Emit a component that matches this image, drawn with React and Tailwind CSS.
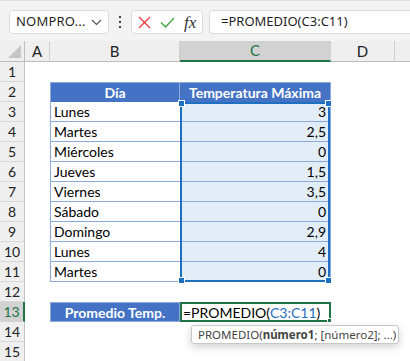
import React from 'react';

const rows = [
  ['Lunes', '3'],
  ['Martes', '2,5'],
  ['Miércoles', '0'],
  ['Jueves', '1,5'],
  ['Viernes', '3,5'],
  ['Sábado', '0'],
  ['Domingo', '2,9'],
  ['Lunes', '4'],
  ['Martes', '0'],
];

const cellFont = { fontFamily: 'Lato, "Liberation Sans", sans-serif' };

const RowHead = ({ n, active }) => (
  <div
    className={
      active
        ? 'flex items-center justify-center bg-[#d2d2d2] border-b border-[#d2d2d2] border-r-2 border-r-[#217346] text-[#217346] text-[14px]'
        : 'flex items-center justify-center bg-[#efefef] border-b border-[#d8d8d8] border-r border-r-[#c4c4c4] text-[#222] text-[14px]'
    }
  >
    {n}
  </div>
);

const Handle = ({ pos }) => (
  <span className={'absolute w-[7px] h-[7px] bg-[#1f6fc0] border border-white ' + pos} />
);

const Toolbar = () => (
  <div className="h-[41px] bg-[#f3f3f3] border-t border-[#e2e2e2] flex items-start pt-[9px]" style={{ fontFamily: '"Noto Sans", "Open Sans", sans-serif' }}>
    <div className="ml-[9px] w-[100px] h-[24px] bg-white border border-[#dcdcdc] rounded-[4px] flex items-center justify-between pl-[6px] pr-[6px]">
      <span className="text-[13px] text-[#1f1f1f] tracking-[0.2px]">NOMPRO...</span>
      <svg width="11" height="7" viewBox="0 0 11 7" fill="none" stroke="#555" strokeWidth="1.2">
        <path d="M1 1l4.5 4.5L10 1" />
      </svg>
    </div>
    <div className="w-[22px] h-[24px] flex flex-col items-center justify-center gap-[3px]">
      <span className="w-[2px] h-[2px] bg-[#444]" />
      <span className="w-[2px] h-[2px] bg-[#444]" />
      <span className="w-[2px] h-[2px] bg-[#444]" />
    </div>
    <div className="w-[72px] h-[24px] bg-white border border-[#dcdcdc] rounded-[4px] flex items-center pl-[6px] gap-[9px]">
      <svg width="13" height="13" viewBox="0 0 13 13" fill="none" stroke="#e8383d" strokeWidth="1.3">
        <path d="M1 1l11 11M12 1L1 12" />
      </svg>
      <svg width="15" height="11" viewBox="0 0 15 11" fill="none" stroke="#3aa845" strokeWidth="1.3">
        <path d="M1 5.5l4.5 4.5L14 1" />
      </svg>
      <span className="text-[17px] italic text-[#333] leading-none" style={{ fontFamily: '"Liberation Serif", serif' }}>fx</span>
    </div>
    <div className="ml-[6px] flex-1 h-[24px] bg-white border border-[#dcdcdc] border-r-0 rounded-l-[4px] flex items-center pl-[11px]">
      <span className="text-[13px] text-[#1f1f1f]">=PROMEDIO(C3:C11)</span>
    </div>
  </div>
);

export default function App() {
  return (
    <div className="w-[410px] h-[361px] overflow-hidden bg-white" style={cellFont}>
      <Toolbar />
      <div className="grid grid-cols-[25px_25px_130px_151px_64px_1fr] grid-rows-[21px_repeat(15,20px)]">
        {/* column headers */}
        <div className="bg-[#efefef] border-r border-b border-[#bdbdbd] flex items-end justify-end pr-[3px] pb-[3px]">
          <svg width="13" height="13" viewBox="0 0 13 13">
            <path d="M13 0V13H0z" fill="#c6c6c6" />
          </svg>
        </div>
        <div className="bg-[#efefef] border-r border-r-[#d0d0d0] border-b border-b-[#bdbdbd] flex items-center justify-center text-[15px] text-[#222]">A</div>
        <div className="bg-[#efefef] border-r border-r-[#d0d0d0] border-b border-b-[#bdbdbd] flex items-center justify-center text-[15px] text-[#222]">B</div>
        <div className="bg-[#d2d2d2] border-r border-r-[#d0d0d0] border-b-2 border-b-[#217346] flex items-center justify-center text-[15px] text-[#217346]">C</div>
        <div className="bg-[#efefef] border-r border-r-[#d0d0d0] border-b border-b-[#bdbdbd] flex items-center justify-center text-[15px] text-[#222]">D</div>
        <div className="bg-[#efefef] border-b border-b-[#bdbdbd]" />

        {/* row 1 */}
        <RowHead n={1} />
        <div className="col-span-5" />

        {/* row 2 header */}
        <RowHead n={2} />
        <div />
        <div className="bg-[#4472c4] border-l border-t border-r border-[#8eaadb] flex items-center justify-center text-white font-bold text-[14px]">Día</div>
        <div className="bg-[#4472c4] border-t border-r border-[#8eaadb] flex items-center justify-center text-white font-bold text-[14px]">Temperatura Máxima</div>
        <div className="col-span-2" />

        {rows.map(([day, val], i) => (
          <React.Fragment key={i}>
            <RowHead n={i + 3} />
            <div />
            <div className="border-l border-b border-[#8eaadb] flex items-center pl-[3px] text-[14px] text-black">{day}</div>
            <div className="relative bg-[#e3edf8] border-r border-b border-[#8eaadb] flex items-center justify-end pr-[4px] text-[14px] text-black">
              {val}
              {i === 0 && (
                <div className="absolute z-10 left-0 top-0 w-full h-[180px] border-2 border-[#1f6fc0] pointer-events-none">
                  <Handle pos="-left-[4px] -top-[4px]" />
                  <Handle pos="-right-[4px] -top-[4px]" />
                  <Handle pos="-left-[4px] -bottom-[4px]" />
                  <Handle pos="-right-[4px] -bottom-[4px]" />
                </div>
              )}
            </div>
            <div className="col-span-2" />
          </React.Fragment>
        ))}

        {/* row 12 */}
        <RowHead n={12} />
        <div className="col-span-5" />

        {/* row 13 */}
        <RowHead n={13} active />
        <div />
        <div className="bg-[#4472c4] border border-[#8eaadb] flex items-center justify-center text-white font-bold text-[14px]">Promedio Temp.</div>
        <div className="relative z-10 border-2 border-[#217346] flex items-center pl-[1px] text-[14px] text-black">
          <span>=PROMEDIO(</span>
          <span className="text-[#1f6fc0]">C3:C11</span>
          <span>)</span>
          <span className="absolute -right-[3px] -bottom-[3px] w-[5px] h-[5px] bg-[#217346] border border-white" />
          <div
            className="absolute left-[9px] top-[21px] w-[208px] h-[19px] bg-white border border-[#c8c8c8] rounded-[3px] shadow-[0_3px_8px_rgba(0,0,0,0.18)] flex items-center pl-[6px] text-[11.5px] text-[#444] whitespace-nowrap"
            style={{ fontFamily: '"Noto Sans", "Open Sans", sans-serif' }}
          >
            PROMEDIO(<span className="font-bold">número1</span>; [número2]; ...)
          </div>
        </div>
        <div className="col-span-2" />

        {/* rows 14-15 */}
        <RowHead n={14} />
        <div className="col-span-5" />
        <RowHead n={15} />
        <div className="col-span-5" />
      </div>
    </div>
  );
}
